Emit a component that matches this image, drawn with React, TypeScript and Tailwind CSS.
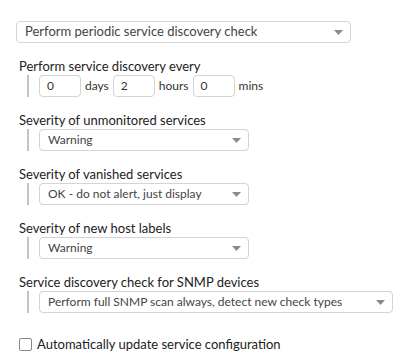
import { useState } from 'react';

function Caret() {
  return (
    <svg width="9" height="5" viewBox="0 0 9 5" className="shrink-0">
      <path d="M0 0h9L4.5 5z" fill="#8a8a8a" />
    </svg>
  );
}

function Select({ value, width, size = 'text-[12px]' }: { value: string; width: string; size?: string }) {
  return (
    <div
      className={`${width} ${size} h-[22px] flex items-center justify-between border border-[#d4d4d4] rounded-[4px] bg-white pl-[8px] pr-[7px] text-[#444]`}
    >
      <span className="truncate">{value}</span>
      <Caret />
    </div>
  );
}

function Field({ label, children }: { label: string; children: React.ReactNode }) {
  return (
    <div className="mt-[15px]">
      <div className="pl-[3px] text-[13px] leading-[16px] text-[#222]">{label}</div>
      <div className="flex mt-[1px] pl-[11px]">
        <div className="w-[2px] bg-[#c4c4c4] mr-[10px]" />
        <div>{children}</div>
      </div>
    </div>
  );
}

function NumInput({ value }: { value: string }) {
  return (
    <div className="w-[42px] h-[22px] flex items-center border border-[#d4d4d4] rounded-[4px] pl-[7px] text-[12px] text-[#333]">
      {value}
    </div>
  );
}

export default function App() {
  const [checked, setChecked] = useState(false);
  return (
    <div className="w-[412px] h-[358px] bg-white pt-[21px] pl-4 font-['Lato',sans-serif]">
      <Select value="Perform periodic service discovery check" width="w-[335px]" size="text-[13px]" />

      <div className="mt-[1px]">
        <Field label="Perform service discovery every">
          <div className="flex items-center gap-[4px] text-[12px] text-[#333]">
            <NumInput value="0" />
            <span>days</span>
            <NumInput value="2" />
            <span>hours</span>
            <NumInput value="0" />
            <span>mins</span>
          </div>
        </Field>
        <Field label="Severity of unmonitored services">
          <Select value="Warning" width="w-[210px]" />
        </Field>
        <Field label="Severity of vanished services">
          <Select value="OK - do not alert, just display" width="w-[210px]" />
        </Field>
        <Field label="Severity of new host labels">
          <Select value="Warning" width="w-[210px]" />
        </Field>
        <Field label="Service discovery check for SNMP devices">
          <Select value="Perform full SNMP scan always, detect new check types" width="w-[354px]" />
        </Field>
      </div>

      <label className="flex items-center mt-[22px] pl-[3px] text-[13px] text-[#222]">
        <input
          type="checkbox"
          checked={checked}
          onChange={() => setChecked(!checked)}
          className="appearance-none w-[13px] h-[13px] border border-[#888] rounded-[2px] bg-white mr-[5px]"
        />
        Automatically update service configuration
      </label>
    </div>
  );
}
